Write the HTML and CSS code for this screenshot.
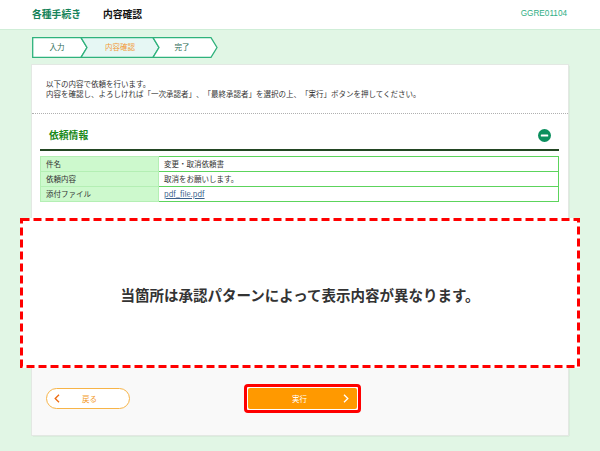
FILE: index.html
```html
<!DOCTYPE html>
<html lang="ja">
<head>
<meta charset="utf-8">
<title>内容確認</title>
<link rel="stylesheet" href="styles.css">
</head>
<body>
<header class="header">
  <div class="header-titles">
    <span class="header-cat">各種手続き</span>
    <span class="header-page">内容確認</span>
  </div>
  <span class="header-id">GGRE01104</span>
</header>

<main class="main">
  <div class="steps">
    <svg class="steps-svg" width="186" height="21" viewBox="0 0 186 21">
      <polygon points="0.7,0.7 49,0.7 55,10.5 49,20.3 0.7,20.3" fill="#ffffff" stroke="#2fb27c" stroke-width="1.3"/>
      <polygon points="49,0.7 121,0.7 127,10.5 121,20.3 49,20.3 55,10.5" fill="#e6f7f4" stroke="#2fb27c" stroke-width="1.3"/>
      <polygon points="121,0.7 179,0.7 185,10.5 179,20.3 121,20.3 127,10.5" fill="#ffffff" stroke="#2fb27c" stroke-width="1.3"/>
      <text x="25" y="13.3" class="step-text step-done">入力</text>
      <text x="88" y="13.3" class="step-text step-current">内容確認</text>
      <text x="150" y="13.3" class="step-text step-done">完了</text>
    </svg>
  </div>

  <section class="card">
    <div class="intro">
      <p>以下の内容で依頼を行います。</p>
      <p>内容を確認し、よろしければ「一次承認者」、「最終承認者」を選択の上、「実行」ボタンを押してください。</p>
    </div>

    <div class="info">
      <div class="info-head">
        <h2 class="info-title">依頼情報</h2>
        <svg class="toggle" width="13" height="13" viewBox="0 0 13 13">
          <circle cx="6.5" cy="6.5" r="6.5" fill="#0b8f5e"/>
          <rect x="2.8" y="5.4" width="7.4" height="2.2" rx="0.6" fill="#ffffff"/>
        </svg>
      </div>
      <table class="info-table">
        <tr><th>件名</th><td>変更・取消依頼書</td></tr>
        <tr><th>依頼内容</th><td>取消をお願いします。</td></tr>
        <tr><th>添付ファイル</th><td><a class="file-link" href="#">pdf_file.pdf</a></td></tr>
      </table>
    </div>

    <div class="approval-area"></div>

    <div class="footer">
      <a class="btn-back" href="#">
        <svg class="chev" width="6" height="9" viewBox="0 0 6 9"><polyline points="5,0.8 1.2,4.5 5,8.2" fill="none" stroke="#ee6a10" stroke-width="1.3"/></svg>
        <span class="btn-back-label">戻る</span>
      </a>
      <div class="exec-frame">
        <a class="btn-exec" href="#">
          <span class="btn-exec-label">実行</span>
          <svg class="chev-r" width="6" height="9" viewBox="0 0 6 9"><polyline points="1,0.8 4.8,4.5 1,8.2" fill="none" stroke="#ffffff" stroke-width="1.3"/></svg>
        </a>
      </div>
    </div>
  </section>
</main>

<div class="notice">
  <svg class="notice-border" width="560" height="150" viewBox="0 0 560 150">
    <rect x="1.5" y="1.5" width="557" height="147" fill="none" stroke="#ff0000" stroke-width="3" stroke-dasharray="8 4"/>
  </svg>
  <p class="notice-text">当箇所は承認パターンによって表示内容が異なります。</p>
</div>
</body>
</html>
```

FILE: styles.css
```css
* { box-sizing: border-box; }

html, body {
  margin: 0;
  padding: 0;
}

body {
  position: relative;
  width: 600px;
  min-height: 451px;
  background: #e1f6e5;
  font-family: "Noto Sans CJK JP", "Noto Sans", sans-serif;
  color: #333333;
  text-spacing-trim: space-all;
}

p, h2 { margin: 0; }

.header {
  height: 30px;
  background: #ffffff;
  border-bottom: 1px solid #cfeed7;
  display: flex;
  align-items: center;
  justify-content: space-between;
  padding: 0 33px 1px 32px;
}

.header-titles {
  display: flex;
  gap: 22px;
  font-size: 9.8px;
  font-weight: bold;
  line-height: 12px;
}

.header-cat { color: #16835a; }
.header-page { color: #111111; }

.header-id {
  font-family: "Liberation Sans", Arial, sans-serif;
  font-size: 8.2px;
  color: #2eae84;
  line-height: 10px;
}

.main {
  padding: 7px 32px 0 32px;
}

.steps {
  height: 20px;
  display: flex;
}

.steps-svg { display: block; margin-top: -0.3px; }

.step-text {
  font-family: "Noto Sans CJK JP", sans-serif;
  font-size: 7.5px;
  text-anchor: middle;
}

.step-done { fill: #2c6b55; }
.step-current { fill: #f39a38; }

.card {
  margin-top: 8px;
  background: #ffffff;
  box-shadow: 0 0 0 1px #e3e8e3, 1px 1px 1px rgba(0, 0, 0, 0.22);
}

.intro {
  padding: 14px 14px;
  font-size: 7.5px;
  line-height: 10px;
  color: #333333;
}

.info {
  border-top: 1px dotted #b0b0b0;
  padding: 0 9px 0 8px;
}

.info-head {
  height: 37px;
  padding: 7px 8px 0 9px;
  display: flex;
  align-items: center;
  justify-content: space-between;
  border-bottom: 2px solid #234623;
}

.info-title {
  font-size: 9.8px;
  line-height: 14px;
  font-weight: bold;
  color: #1a8a1a;
}

.toggle { display: block; }

.info-table {
  margin-top: 5px;
  width: 100%;
  border-collapse: collapse;
  font-size: 7.5px;
  line-height: 10px;
}

.info-table th,
.info-table td {
  height: 15px;
  padding: 0 4px 0 5px;
  border: 1px solid #5cd45c;
  text-align: left;
  font-weight: normal;
  vertical-align: middle;
}

.info-table th {
  width: 118px;
  background: #cdf9cd;
  border-color: #b4efb4;
  color: #333333;
}

.info-table td { color: #333333; }

.file-link {
  color: #3a5f8a;
  text-decoration: underline;
}

.approval-area {
  height: 166px;
}

.footer {
  background: #f9f9f9;
  padding: 16px 0 22px 14px;
  display: flex;
  align-items: center;
  height: 67px;
}

.btn-back {
  width: 84px;
  height: 21px;
  border: 1px solid #f7b448;
  border-radius: 11px;
  background: #ffffff;
  display: flex;
  align-items: center;
  padding-left: 7px;
  text-decoration: none;
}

.chev, .chev-r { display: block; }

.btn-back-label {
  margin-left: 22px;
  font-size: 7.5px;
  line-height: 10px;
  color: #f39a2a;
}

.exec-frame {
  margin-left: 114px;
  width: 117px;
  height: 29px;
  border: 3px solid #ff0000;
  border-radius: 4px;
  padding: 1px;
  background: #ffffff;
}

.btn-exec {
  height: 21px;
  background: #ff9900;
  border-radius: 2px;
  display: flex;
  align-items: center;
  justify-content: center;
  position: relative;
  text-decoration: none;
}

.btn-exec-label {
  font-size: 7.5px;
  line-height: 10px;
  color: #ffffff;
  margin-left: -6px;
}

.chev-r {
  position: absolute;
  right: 8px;
  top: 6px;
}

.notice {
  position: absolute;
  left: 20px;
  top: 218px;
  width: 560px;
  height: 150px;
  background: #ffffff;
  display: flex;
  align-items: center;
  justify-content: center;
}

.notice-border {
  position: absolute;
  left: 0;
  top: 0;
}

.notice-text {
  position: relative;
  font-size: 14.5px;
  font-weight: bold;
  color: #333333;
  line-height: 18px;
  margin-top: 3px;
}
```
